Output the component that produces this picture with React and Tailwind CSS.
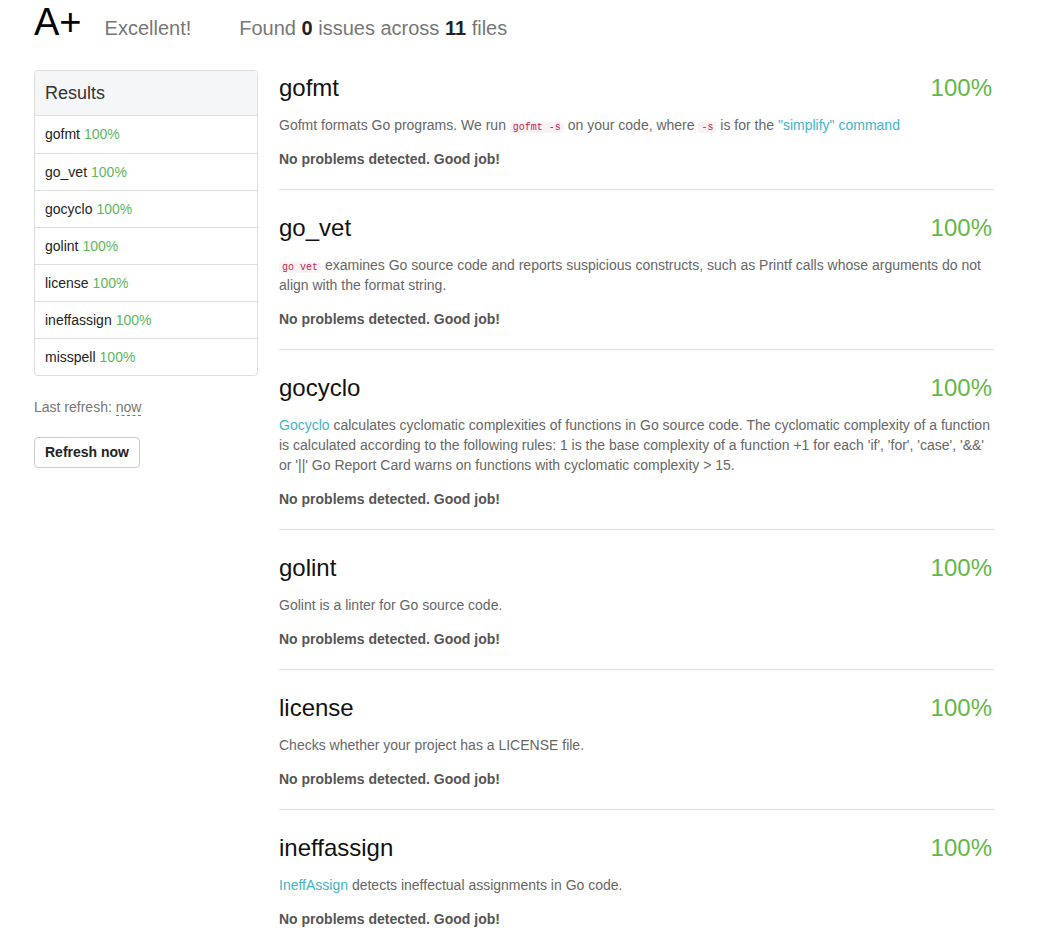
import React from "react"

const checks = [
  { name: "gofmt", score: "100%" },
  { name: "go_vet", score: "100%" },
  { name: "gocyclo", score: "100%" },
  { name: "golint", score: "100%" },
  { name: "license", score: "100%" },
  { name: "ineffassign", score: "100%" },
  { name: "misspell", score: "100%" },
]

function Code({ children }) {
  return (
    <code className="font-['Liberation_Mono',monospace] text-[10px] leading-none text-[#c7254e] bg-[#f9f2f4] px-[3px] rounded-[3px]">
      {children}
    </code>
  )
}

function Link({ children }) {
  return <a className="text-[#3fb3c8]">{children}</a>
}

const descriptions = {
  gofmt: (
    <>
      Gofmt formats Go programs. We run <Code>gofmt -s</Code> on your code, where <Code>-s</Code> is for the{" "}
      <Link>"simplify" command</Link>
    </>
  ),
  go_vet: (
    <>
      <Code>go vet</Code> examines Go source code and reports suspicious constructs, such as Printf calls whose
      arguments do not align with the format string.
    </>
  ),
  gocyclo: (
    <>
      <Link>Gocyclo</Link> calculates cyclomatic complexities of functions in Go source code. The cyclomatic
      complexity of a function is calculated according to the following rules: 1 is the base complexity of a function
      +1 for each 'if', 'for', 'case', '&&' or '||' Go Report Card warns on functions with cyclomatic complexity &gt;
      15.
    </>
  ),
  golint: <>Golint is a linter for Go source code.</>,
  license: <>Checks whether your project has a LICENSE file.</>,
  ineffassign: (
    <>
      <Link>IneffAssign</Link> detects ineffectual assignments in Go code.
    </>
  ),
  misspell: (
    <>
      <Link>Misspell</Link> Finds commonly misspelled English words
    </>
  ),
}

export default function App() {
  return (
    <div className="min-h-screen bg-white px-[34px] font-['Liberation_Sans',Arial,sans-serif] text-[14px] text-[#333]">
      <header className="flex items-baseline pt-[3px] h-[70px]">
        <span className="text-[38px] leading-[38px] text-black">A+</span>
        <span className="ml-[23px] text-[20px] text-[#777]">Excellent!</span>
        <span className="ml-[48px] text-[20px] text-[#777]">
          Found <b className="text-[#222]">0</b> issues across <b className="text-[#222]">11</b> files
        </span>
      </header>

      <div className="flex gap-[21px]">
        <aside className="w-[224px] shrink-0">
          <div className="border border-[#ddd] rounded-[4px] overflow-hidden">
            <div className="h-[45px] bg-[#f5f6f8] border-b border-[#ddd] px-[10px] flex items-center text-[18px] text-[#333]">
              Results
            </div>
            {checks.map((c, i) => (
              <div
                key={c.name}
                className={`h-[37px] px-[10px] flex items-center ${i > 0 ? "border-t border-[#ddd]" : ""}`}
              >
                <span className="text-[#222]">{c.name}</span>
                <span className="ml-[4px] text-[#5cb85c]">{c.score}</span>
              </div>
            ))}
          </div>
          <p className="mt-[21px] leading-5 text-[#777]">
            Last refresh: <abbr className="no-underline border-b border-dashed border-[#777]">now</abbr>
          </p>
          <button className="mt-[20px] h-[31px] px-[10px] border border-[#ccc] rounded-[4px] bg-white font-bold text-[#222]">
            Refresh now
          </button>
        </aside>

        <main className="flex-1 max-w-[715px] pt-[4px]">
          {checks.map((c, i) => (
            <section key={c.name} className={i > 0 ? "mt-6" : ""}>
              <div className="flex justify-between items-center h-[28px]">
                <h2 className="text-[24px] leading-[28px] text-[#111]">{c.name}</h2>
                <span className="text-[24px] leading-[28px] text-[#62b845] mr-[2px]">{c.score}</span>
              </div>
              <p className="mt-[13px] leading-5 text-[#666]">{descriptions[c.name]}</p>
              <p className="mt-[14px] leading-5 font-bold text-[#555]">No problems detected. Good job!</p>
              <hr className="mt-5 border-t border-[#ddd]" />
            </section>
          ))}
        </main>
      </div>
    </div>
  )
}
